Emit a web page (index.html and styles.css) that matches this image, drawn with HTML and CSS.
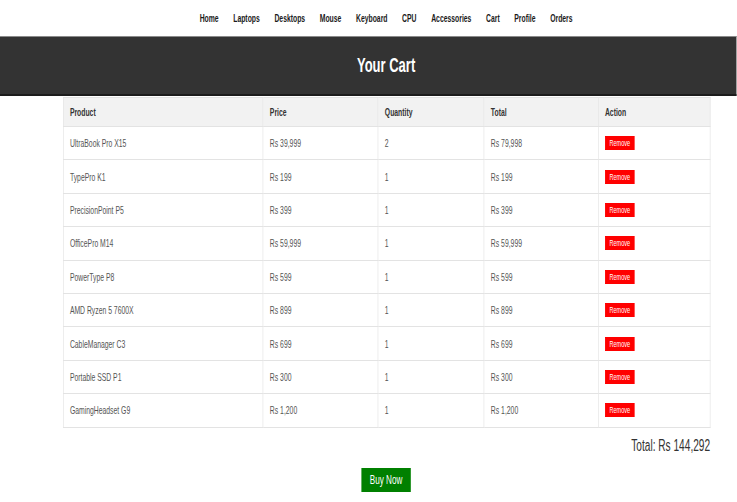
FILE: index.html
```html
<!DOCTYPE html>
<html lang="en">
<head>
<meta charset="utf-8">
<title>Your Cart</title>
<link rel="stylesheet" href="styles.css">
</head>
<body>
<div class="frame">
<div class="page">
  <nav class="nav">
    <a href="#">Home</a>
    <a href="#">Laptops</a>
    <a href="#">Desktops</a>
    <a href="#">Mouse</a>
    <a href="#">Keyboard</a>
    <a href="#">CPU</a>
    <a href="#">Accessories</a>
    <a href="#">Cart</a>
    <a href="#">Profile</a>
    <a href="#">Orders</a>
  </nav>
  <header class="banner"><h1>Your Cart</h1></header>
  <main class="content">
    <table class="cart">
      <colgroup>
        <col class="c-product"><col class="c-price"><col class="c-qty"><col class="c-total"><col class="c-action">
      </colgroup>
      <thead>
        <tr><th>Product</th><th>Price</th><th>Quantity</th><th>Total</th><th>Action</th></tr>
      </thead>
      <tbody>
        <tr><td>UltraBook Pro X15</td><td>Rs 39,999</td><td>2</td><td>Rs 79,998</td><td><button class="remove">Remove</button></td></tr>
        <tr><td>TypePro K1</td><td>Rs 199</td><td>1</td><td>Rs 199</td><td><button class="remove">Remove</button></td></tr>
        <tr><td>PrecisionPoint P5</td><td>Rs 399</td><td>1</td><td>Rs 399</td><td><button class="remove">Remove</button></td></tr>
        <tr><td>OfficePro M14</td><td>Rs 59,999</td><td>1</td><td>Rs 59,999</td><td><button class="remove">Remove</button></td></tr>
        <tr><td>PowerType P8</td><td>Rs 599</td><td>1</td><td>Rs 599</td><td><button class="remove">Remove</button></td></tr>
        <tr><td>AMD Ryzen 5 7600X</td><td>Rs 899</td><td>1</td><td>Rs 899</td><td><button class="remove">Remove</button></td></tr>
        <tr><td>CableManager C3</td><td>Rs 699</td><td>1</td><td>Rs 699</td><td><button class="remove">Remove</button></td></tr>
        <tr><td>Portable SSD P1</td><td>Rs 300</td><td>1</td><td>Rs 300</td><td><button class="remove">Remove</button></td></tr>
        <tr><td>GamingHeadset G9</td><td>Rs 1,200</td><td>1</td><td>Rs 1,200</td><td><button class="remove">Remove</button></td></tr>
      </tbody>
    </table>
    <div class="total">Total: Rs 144,292</div>
    <div class="buy-wrap"><button class="buy">Buy Now</button></div>
  </main>
</div>
</div>
</body>
</html>
```

FILE: styles.css
```css
html, body {
  margin: 0;
  padding: 0;
  overflow: hidden;
  background: #fff;
}

body {
  font-family: "Liberation Sans", Arial, sans-serif;
  color: #333;
}

.frame {
  width: 737px;
  overflow: hidden;
}

/* The reference is horizontally condensed; the page is laid out wide and squeezed. */
.page {
  width: 1133px;
  transform: scaleX(0.65);
  transform-origin: 0 0;
}

.nav {
  height: 36px;
  padding-left: 55px;
  display: flex;
  justify-content: center;
  align-items: center;
  gap: 22.5px;
}

.nav a {
  font-size: 10.5px;
  font-weight: bold;
  color: #1a1a1a;
  text-decoration: none;
}

.banner {
  border-top: 1px solid #8a8a8a;
  border-bottom: 2px solid #1c1c1c;
  background: #333;
  height: 57px;
  padding-left: 55px;
  display: flex;
  justify-content: center;
  align-items: center;
}

.banner h1 {
  margin: 0;
  color: #fff;
  font-size: 20px;
  font-weight: bold;
}

.content {
  padding-left: 55px;
  padding-top: 1px;
}

.cart {
  width: 996px;
  margin: 0 0 0 41.5px;
  border-collapse: collapse;
  table-layout: fixed;
  font-size: 10.5px;
}

.c-product { width: 307.7px; }
.c-price { width: 176.9px; }
.c-qty { width: 163.1px; }
.c-total { width: 175.5px; }
.c-action { width: 172.8px; }

.cart th,
.cart td {
  border: 1px solid #e3e3e3;
  padding: 0 10px;
  text-align: left;
  vertical-align: middle;
}

.cart thead tr {
  height: 29px;
  background: #f2f2f2;
}

.cart th {
  font-weight: bold;
  color: #333;
}

.cart tbody tr {
  height: 33.4px;
}

.cart td {
  color: #555;
}

.remove {
  font-family: "Liberation Sans", Arial, sans-serif;
  font-size: 8.5px;
  line-height: 10px;
  padding: 1px 6px;
  border: 1px solid #ff0000;
  background: #ff0000;
  color: #fff;
  margin: 0;
}

.total {
  width: 996px;
  margin-left: 41.5px;
  margin-top: 9px;
  text-align: right;
  font-size: 15.6px;
  line-height: 18px;
  color: #333;
}

.buy-wrap {
  display: flex;
  justify-content: center;
  margin-top: 13px;
}

.buy {
  font-family: "Liberation Sans", Arial, sans-serif;
  font-size: 12.5px;
  background: #008000;
  color: #fff;
  border: none;
  padding: 5px 12.5px;
  line-height: 14px;
}
```
